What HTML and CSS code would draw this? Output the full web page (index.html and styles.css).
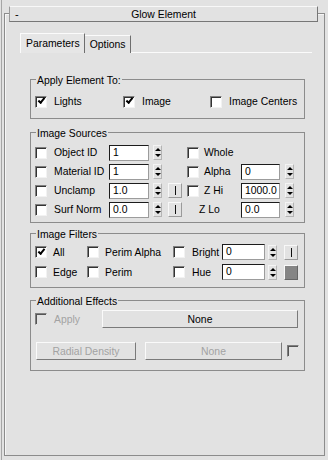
FILE: index.html
```html
<!DOCTYPE html>
<html lang="en">
<head>
    <meta charset="UTF-8">
    <title>Glow Element</title>
    <link rel="stylesheet" href="styles.css">
</head>
<body>
    <div class="panel">
        <div class="rollout">
            <div class="rollout-head">
                <span class="toggle">-</span>
                <span class="rollout-title">Glow Element</span>
                <span></span>
            </div>

            <div class="tabs">
                <span class="tab active">Parameters</span>
                <span class="tab">Options</span>
                <span class="tab-fill"></span>
            </div>

            <!-- Apply Element To -->
            <div class="group group-apply">
                <div class="group-title">Apply Element To:</div>
                <div class="apply-row">
                    <label class="check"><span class="cb on"></span>Lights</label>
                    <label class="check"><span class="cb on"></span>Image</label>
                    <label class="check"><span class="cb"></span>Image Centers</label>
                </div>
            </div>

            <!-- Image Sources -->
            <div class="group group-sources">
                <div class="group-title">Image Sources</div>
                <div class="src-row">
                    <span class="cb"></span><span class="lbl">Object ID</span><span class="field">1</span><span class="spin"></span>
                    <span></span>
                    <span class="cb"></span><span class="lbl">Whole</span><span></span><span></span>
                </div>
                <div class="src-row">
                    <span class="cb"></span><span class="lbl">Material ID</span><span class="field">1</span><span class="spin"></span>
                    <span></span>
                    <span class="cb"></span><span class="lbl">Alpha</span><span class="field">0</span><span class="spin"></span>
                </div>
                <div class="src-row">
                    <span class="cb"></span><span class="lbl">Unclamp</span><span class="field">1.0</span><span class="spin"></span>
                    <span class="pick"></span>
                    <span class="cb"></span><span class="lbl">Z Hi</span><span class="field">1000.0</span><span class="spin"></span>
                </div>
                <div class="src-row">
                    <span class="cb"></span><span class="lbl">Surf Norm</span><span class="field">0.0</span><span class="spin"></span>
                    <span class="pick"></span>
                    <span class="lbl lbl-wide">Z Lo</span><span class="field">0.0</span><span class="spin"></span>
                </div>
            </div>

            <!-- Image Filters -->
            <div class="group group-filters">
                <div class="group-title">Image Filters</div>
                <div class="flt-row">
                    <span class="cb on"></span><span class="lbl">All</span>
                    <span class="cb"></span><span class="lbl">Perim Alpha</span>
                    <span class="cb"></span><span class="lbl">Bright</span><span class="field">0</span><span class="spin"></span>
                    <span class="pick"></span>
                </div>
                <div class="flt-row">
                    <span class="cb"></span><span class="lbl">Edge</span>
                    <span class="cb"></span><span class="lbl">Perim</span>
                    <span class="cb"></span><span class="lbl">Hue</span><span class="field">0</span><span class="spin"></span>
                    <span class="swatch"></span>
                </div>
            </div>

            <!-- Additional Effects -->
            <div class="group group-effects">
                <div class="group-title">Additional Effects</div>
                <div class="fx-row">
                    <span class="cb off"></span><span class="lbl disabled">Apply</span>
                    <span class="btn">None</span>
                </div>
                <div class="fx-row2">
                    <span class="btn disabled">Radial Density</span>
                    <span class="btn disabled">None</span>
                    <span class="cb off"></span>
                </div>
            </div>
        </div>
    </div>
</body>
</html>
```

FILE: styles.css
```css
:root {
    --bg: #e2e2e2;
    --line: #8c8c8c;
    --dark: #7a7a7a;
    --light: #fbfbfb;
    --muted: #a2a2a2;
}

body {
    margin: 0;
    background: var(--bg);
    font-family: "Liberation Sans", Arial, sans-serif;
    font-size: 10.4px;
    color: #000;
}

.panel {
    height: 460px;
    margin-left: 1px;
    padding: 13px 0 0 2px;
    border-left: 1px solid #a6a6a6;
    box-sizing: border-box;
}

.rollout {
    width: 321px;
    height: 443px;
    border: 1px solid var(--line);
    box-shadow: inset 1px 1px 0 #f6f6f6;
    box-sizing: border-box;
}

.rollout-head {
    display: grid;
    grid-template-columns: 1fr auto 1fr;
    align-items: center;
    height: 16px;
    margin: -8px 6px 0 4px;
    padding: 0 5px;
    background: var(--bg);
    border: 1px solid;
    border-color: #f8f8f8 #777 #777 #9a9a9a;
    box-sizing: border-box;
}

.toggle {
    font-size: 11px;
}

/* tabs */
.tabs {
    display: flex;
    height: 20px;
    margin: 11px 12px 0 15px;
}

.tab {
    display: flex;
    align-items: center;
    padding: 0 4px 0 5px;
    border-left: 1px solid var(--light);
    border-top: 1px solid var(--light);
    border-right: 1px solid #6e6e6e;
}

.tab.active {
    background: #e6e6e6;
}

.tab + .tab {
    margin-top: 2px;
    border-left: none;
}

.tab-fill {
    flex: 1;
    border-bottom: 1px solid var(--light);
}

/* groups */
.group {
    width: 275px;
    margin-left: 25px;
    padding: 0 0 0 4px;
    border: 1px solid var(--line);
    box-sizing: border-box;
}

.group-title {
    width: fit-content;
    height: 12px;
    line-height: 12px;
    margin: -5px 0 0 1px;
    padding: 0 1px;
    background: var(--bg);
}

.group-apply {
    margin-top: 26px;
    padding-bottom: 7px;
}

.group-sources {
    margin-top: 13px;
    padding-bottom: 3px;
}

.group-filters {
    margin-top: 10px;
    padding-bottom: 5px;
}

.group-effects {
    margin-top: 12px;
    padding-bottom: 9px;
}

/* controls */
.cb {
    display: flex;
    align-items: center;
    justify-content: center;
    width: 12px;
    height: 12px;
    background: #fff;
    border: 1px solid;
    border-color: #808080 #f2f2f2 #f2f2f2 #808080;
    box-shadow: inset 1px 1px 0 #333;
    box-sizing: border-box;
}

.cb.on::before {
    content: "";
    width: 5px;
    height: 2px;
    margin: -3px 0 0 1px;
    border-left: 2px solid #000;
    border-bottom: 2px solid #000;
    transform: rotate(-50deg);
}

.cb.off {
    background: var(--bg);
    border-color: #808080 var(--bg) var(--bg) #808080;
    box-shadow: inset 1px 1px 0 #555;
}

.field {
    height: 16px;
    padding-left: 3px;
    line-height: 14px;
    background: #fff;
    border: 1px solid;
    border-color: #1c1c1c #9c9c9c #9c9c9c #1c1c1c;
    box-sizing: border-box;
    overflow: hidden;
}

.spin {
    display: flex;
    flex-direction: column;
    justify-content: space-between;
    align-items: center;
    width: 9px;
    height: 15px;
    padding: 2px 0;
    border: 1px solid;
    border-color: #f4f4f4 #b4b4b4 #b4b4b4 #f4f4f4;
    box-sizing: border-box;
    justify-self: end;
}

.spin::before,
.spin::after {
    content: "";
    border-left: 3px solid transparent;
    border-right: 3px solid transparent;
}

.spin::before {
    border-bottom: 3px solid #000;
}

.spin::after {
    border-top: 3px solid #000;
}

.pick {
    display: flex;
    justify-content: center;
    align-items: center;
    width: 14px;
    height: 15px;
    border: 1px solid;
    border-color: #f8f8f8 #9a9a9a #9a9a9a #f8f8f8;
    box-sizing: border-box;
    justify-self: end;
}

.pick::before {
    content: "";
    width: 1px;
    height: 9px;
    background: #111;
}

.swatch {
    width: 14px;
    height: 15px;
    background: #858585;
    border: 1px solid;
    border-color: #f8f8f8 #666 #666 #f8f8f8;
    box-sizing: border-box;
    justify-self: end;
}

.btn {
    display: flex;
    align-items: center;
    justify-content: center;
    height: 18px;
    border: 1px solid;
    border-color: #fafafa var(--dark) var(--dark) #fafafa;
    box-sizing: border-box;
}

.disabled {
    color: var(--muted);
}

/* rows */
.apply-row {
    display: grid;
    grid-template-columns: 88px 87px auto;
    align-items: center;
    height: 19px;
    margin-top: 5px;
}

.check {
    display: flex;
    align-items: center;
    gap: 7px;
}

.src-row {
    display: grid;
    grid-template-columns: 12px 62px 40px 13px 20px 17px 42px 39px 14px;
    align-items: center;
    height: 19px;
}

.group-sources .group-title + .src-row {
    margin-top: 3px;
}

.src-row .lbl {
    padding-left: 7px;
}

.src-row .cb:nth-child(6) {
    justify-self: end;
}

.src-row .lbl:nth-child(7) {
    padding-left: 5px;
}

.src-row .lbl-wide {
    grid-column: span 2;
    padding-left: 0;
    justify-self: end;
    width: 42px;
}

.flt-row {
    display: grid;
    grid-template-columns: 12px 40px 12px 74px 12px 37px 43px 12px 21px;
    align-items: center;
    height: 20px;
}

.group-filters .group-title + .flt-row {
    margin-top: 1px;
}

.flt-row .lbl {
    padding-left: 6px;
}

.flt-row .lbl:nth-child(6) {
    padding-left: 7px;
}

.fx-row {
    display: grid;
    grid-template-columns: 12px 55px 196px;
    align-items: center;
    height: 20px;
    margin-top: 1px;
}

.fx-row .lbl {
    padding-left: 7px;
}

.fx-row2 {
    display: grid;
    grid-template-columns: 100px 137px 12px;
    column-gap: 9px;
    align-items: center;
    height: 20px;
    margin: 12px 0 0 1px;
}

.fx-row2 .cb {
    margin-left: -4px;
}
```
